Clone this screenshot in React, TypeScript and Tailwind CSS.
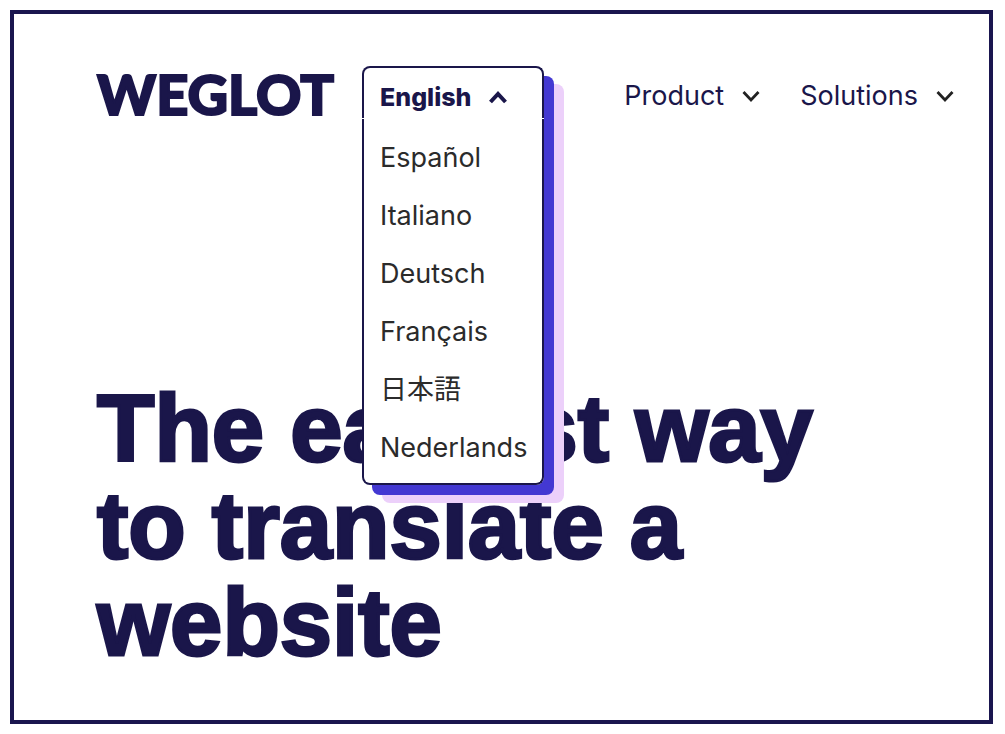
import React, { useState } from 'react';

const languages = ['Español', 'Italiano', 'Deutsch', 'Français', '日本語', 'Nederlands'];

const navItems = ['Product', 'Solutions'];

const Chevron: React.FC<{ className?: string; strokeWidth?: number }> = ({ className, strokeWidth = 2.8 }) => (
    <svg viewBox="0 0 18 14" className={className} fill="none" stroke="currentColor" strokeWidth={strokeWidth} aria-hidden="true">
        <path d="M1.5 3L9 11l7.5-8" />
    </svg>
);

const LanguageSwitcher: React.FC = () => {
    const [isOpen, setIsOpen] = useState(true);
    const [current, setCurrent] = useState('English');

    return (
        <div className="relative z-10 h-[52px] w-[182px] shrink-0">
            <div className="absolute inset-x-0 top-0 flex flex-col gap-px rounded-lg bg-white shadow-[10px_10px_0_#4338d2,20px_18px_0_#ecd0fa]">
                <button
                    type="button"
                    aria-expanded={isOpen}
                    onClick={() => setIsOpen(!isOpen)}
                    className="flex h-[52px] items-center gap-[18px] rounded-t-lg border-2 border-b-0 border-[#1a164a] px-4 pt-2.5 text-[25px] font-extrabold text-[#1a164a]"
                >
                    {current}
                    <Chevron className="h-3.5 w-[18px] rotate-180" strokeWidth={4} />
                </button>
                {isOpen && (
                    <ul className="rounded-b-lg border-2 border-t-0 border-[#1a164a] pt-2.5 pb-1.5">
                        {languages.map((language) => (
                            <li key={language}>
                                <a
                                    href="#"
                                    onClick={() => setCurrent(language)}
                                    className="flex h-[58px] items-center px-4 text-[27px] text-[#2b2b2b]"
                                >
                                    {language}
                                </a>
                            </li>
                        ))}
                    </ul>
                )}
            </div>
        </div>
    );
};

export default function App() {
    return (
        <div className="flex min-h-screen bg-white py-2.5 pr-3 pl-2.5 font-[Inter,'Noto_Sans_CJK_JP',sans-serif]">
            <div className="flex-1 border-4 border-[#1a164f]">
                {/* Header */}
                <header className="flex items-center pt-[52px] pr-[35px] pl-[83px]">
                    <div className="w-[265px] shrink-0">
                        <a
                            href="#"
                            className="block pt-1 font-[Lato,sans-serif] text-[56px] leading-[48px] font-black text-[#1a164a] [-webkit-text-stroke:2px_#1a164a]"
                        >
                            WEGLOT
                        </a>
                    </div>
                    <LanguageSwitcher />
                    <nav className="ml-auto flex items-center gap-10 pt-2">
                        {navItems.map((item) => (
                            <button key={item} type="button" className="flex items-center gap-[18px] text-[27px] text-[#1a164a]">
                                {item}
                                <Chevron className="h-3.5 w-[18px] text-[#222]" />
                            </button>
                        ))}
                    </nav>
                </header>

                {/* Hero */}
                <main className="pt-[262px] pl-[83px]">
                    <h1 className="font-['Liberation_Sans',sans-serif] text-[94px] leading-[97px] font-bold text-[#1a164a] [-webkit-text-stroke:3px_#1a164a]">
                        The easiest way
                        <br />
                        to translate a
                        <br />
                        website
                    </h1>
                </main>
            </div>
        </div>
    );
}
